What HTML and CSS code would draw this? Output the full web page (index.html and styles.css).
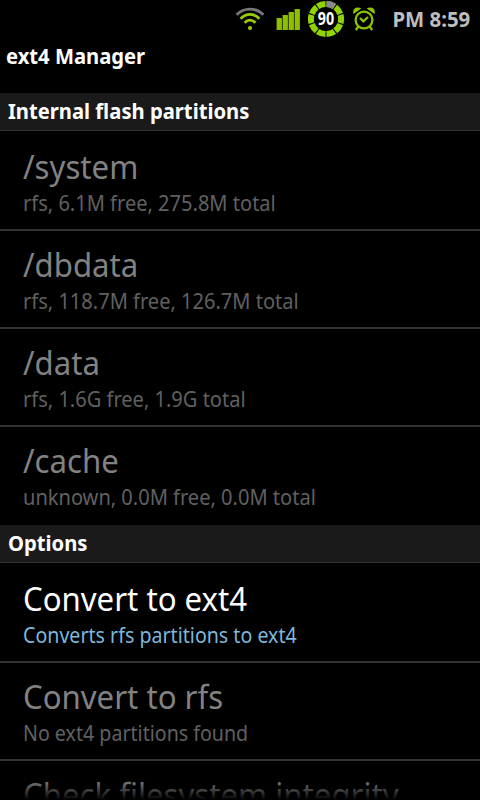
FILE: index.html
```html
<!DOCTYPE html>
<html lang="en">
<head>
  <meta charset="UTF-8">
  <meta name="viewport" content="width=device-width, initial-scale=1.0">
  <title>ext4 Manager</title>
  <link rel="stylesheet" href="styles.css">
</head>
<body>
<div class="screen">
  <div class="status-bar">
    <svg class="wifi" width="30" height="26" viewBox="0 0 30 26">
      <g fill="none" stroke-width="2.8">
        <path d="M1.6 8.8 C9 1.2 21 1.2 28.4 8.8" stroke="#777"/>
        <path d="M5.6 12.8 C11 7 19 7 24.4 12.8" stroke="#9c0"/>
        <path d="M9.6 16.8 C13 13.2 17 13.2 20.4 16.8" stroke="#9c0"/>
      </g>
      <circle cx="15" cy="22" r="2.1" fill="#9c0"/>
    </svg>
    <svg class="signal" width="25" height="24" viewBox="0 0 25 24">
      <g fill="#8cbf00">
        <rect x="0.6" y="11" width="5.3" height="12" rx="0.6"/>
        <rect x="6.6" y="8" width="5.3" height="15" rx="0.6"/>
        <rect x="12.6" y="5" width="5.3" height="18" rx="0.6"/>
        <rect x="18.6" y="2" width="5.3" height="21" rx="0.6"/>
      </g>
    </svg>
    <div class="battery">
      <svg width="38" height="38" viewBox="0 0 38 38">
        <circle cx="19" cy="19" r="15.1" fill="none" stroke="#8fd400" stroke-width="6" pathLength="100" stroke-dasharray="8.9 1.1" stroke-dashoffset="-0.55" transform="rotate(-90 19 19)"/>
        <circle cx="19" cy="19" r="15.1" fill="none" stroke="#888" stroke-width="6.2" pathLength="100" stroke-dasharray="8.9 91.1" stroke-dashoffset="-0.55" transform="rotate(-90 19 19)"/>
      </svg>
      <span class="battery-level">90</span>
    </div>
    <svg class="alarm" width="24" height="26" viewBox="0 0 24 26">
      <g fill="none" stroke="#8cc400" stroke-width="2.3">
        <circle cx="12" cy="14" r="8.4"/>
        <path d="M8 12 L11.3 15.3 L16 11"/>
        <path d="M6.4 20.4 L3.8 24 M17.6 20.4 L20.2 24"/>
      </g>
      <path d="M1.4 8 C0 3 4 -0.4 9.4 2.4 Z M22.6 8 C24 3 20 -0.4 14.6 2.4 Z" fill="#8cc400"/>
    </svg>
    <span class="clock">PM 8:59</span>
  </div>

  <div class="title-bar"><span>ext4 Manager</span></div>

  <div class="list">
    <h2 class="category"><span>Internal flash partitions</span></h2>
    <div class="item disabled">
      <div class="name">/system</div>
      <div class="summary">rfs, 6.1M free, 275.8M total</div>
    </div>
    <div class="item disabled">
      <div class="name">/dbdata</div>
      <div class="summary">rfs, 118.7M free, 126.7M total</div>
    </div>
    <div class="item disabled">
      <div class="name">/data</div>
      <div class="summary">rfs, 1.6G free, 1.9G total</div>
    </div>
    <div class="item disabled last">
      <div class="name">/cache</div>
      <div class="summary">unknown, 0.0M free, 0.0M total</div>
    </div>

    <h2 class="category"><span>Options</span></h2>
    <div class="item option">
      <div class="name">Convert to ext4</div>
      <div class="summary">Converts rfs partitions to ext4</div>
    </div>
    <div class="item option disabled">
      <div class="name">Convert to rfs</div>
      <div class="summary">No ext4 partitions found</div>
    </div>
    <div class="item option disabled">
      <div class="name">Check filesystem integrity</div>
    </div>
    <div class="fade"></div>
  </div>
</div>
</body>
</html>
```
FILE: styles.css
```css
* {
  box-sizing: border-box;
}

body {
  margin: 0;
  background: #000;
  color: #fff;
  font-family: "Noto Sans", "Open Sans", sans-serif;
}

.screen {
  width: 480px;
  height: 800px;
  overflow: hidden;
  display: flex;
  flex-direction: column;
}

.status-bar {
  height: 38px;
  flex: none;
  display: flex;
  align-items: center;
  justify-content: flex-end;
  padding-right: 10px;
}

.signal {
  margin: 0 6px 0 11px;
}

.battery {
  position: relative;
  width: 38px;
  height: 38px;
}

.battery-level {
  position: absolute;
  inset: 0;
  font-size: 17px;
  font-weight: bold;
  line-height: 38px;
  text-align: center;
  transform: scaleX(0.84);
}

.alarm {
  margin: 0 14px 0 7px;
}

.clock {
  color: #bebebe;
  font-size: 21px;
  font-weight: bold;
  line-height: 38px;
  transform: scaleX(0.97);
  transform-origin: right;
}

.title-bar {
  height: 55px;
  flex: none;
  padding-left: 6px;
  font-size: 21px;
  font-weight: bold;
  line-height: 37px;
}

.title-bar span,
.category span {
  display: inline-block;
  transform: scaleX(0.962);
  transform-origin: left;
}

.list {
  position: relative;
  flex: 1;
  min-height: 0;
  overflow: hidden;
}

.category {
  height: 38px;
  margin: 0 0 2px;
  padding-left: 8px;
  background: #1a1a1a;
  border-bottom: 1px solid #333;
  font-size: 21px;
  font-weight: bold;
  line-height: 37px;
}

.item {
  height: 98px;
  padding: 12px 0 0 23px;
  border-bottom: 2px solid #333;
}

.item.last {
  border-bottom-color: transparent;
}

.name {
  font-size: 33px;
  line-height: 44px;
  transform: scaleX(0.944);
  transform-origin: left;
}

.summary {
  color: #7db7dc;
  font-size: 21px;
  line-height: 28px;
  transform: scaleX(0.955);
  transform-origin: left;
}

.option .summary {
  transform: scaleX(0.934);
}

.disabled .name {
  color: #828282;
}

.disabled .summary {
  color: #606060;
}

/* scroll edge at the bottom of the list */
.fade {
  position: absolute;
  left: 0;
  right: 0;
  bottom: 0;
  height: 20px;
  background: linear-gradient(transparent, #000);
}
```
